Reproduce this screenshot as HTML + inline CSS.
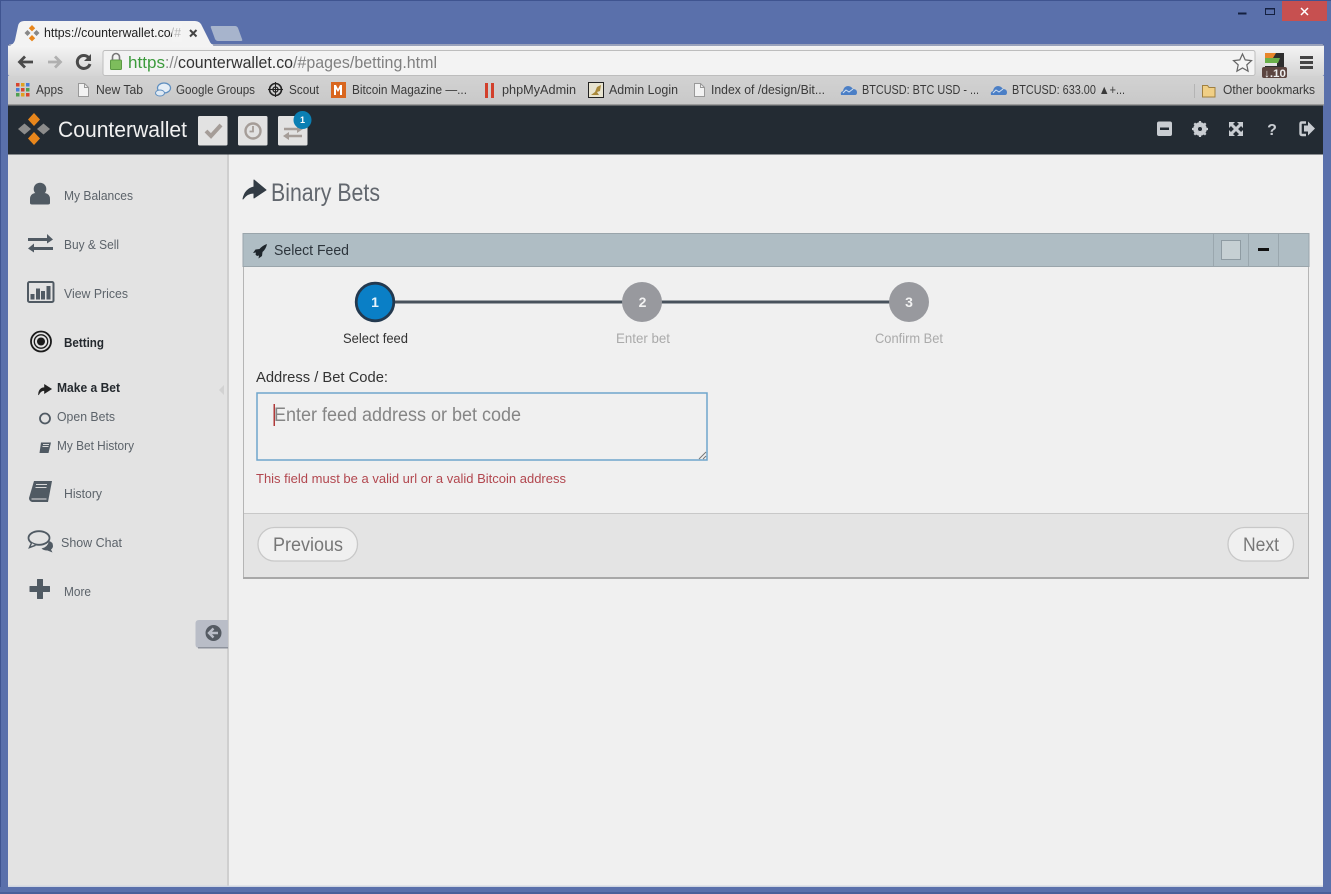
<!DOCTYPE html>
<html lang="en"><head><meta charset="utf-8"><title>Counterwallet - Binary Bets</title>
<style>
html,body{margin:0;padding:0;width:1331px;height:894px;overflow:hidden;background:#5a70ab}
svg{display:block;position:absolute;left:0;top:0;filter:blur(.3px)}
text{font-family:"Liberation Sans",Arial,sans-serif}
.bm{font-size:12.5px;fill:#3a3a3a}
.nav{font-size:12.5px;fill:#5c636a}
</style></head><body>
<svg width="1331" height="894" viewBox="0 0 1331 894" xmlns="http://www.w3.org/2000/svg">
<defs>
<linearGradient id="tb" x1="0" y1="0" x2="0" y2="1"><stop offset="0" stop-color="#f6f6f6"/><stop offset="1" stop-color="#d4d4d4"/></linearGradient>
<linearGradient id="bb" x1="0" y1="0" x2="0" y2="1"><stop offset="0" stop-color="#d2d2d2"/><stop offset="1" stop-color="#c8c8c8"/></linearGradient>
</defs>
<!-- window -->
<rect width="1331" height="894" fill="#5a70ab"/>
<rect width="1331" height="1" fill="#3f5490"/>
<rect width="1" height="894" fill="#3f5490"/>
<rect x="1282" y="1" width="45" height="20" fill="#c75050"/>
<path d="M1301 8l7 7M1308 8l-7 7" stroke="#fff" stroke-width="1.500"/>
<rect x="1238" y="12.500" width="8.500" height="2" fill="#14203f"/>
<rect x="1265.500" y="8.500" width="9" height="6" fill="none" stroke="#14203f" stroke-width="1"/>
<rect x="1265" y="8" width="10" height="1.500" fill="#14203f"/>
<!-- tabs -->
<path d="M212 26h23q2 0 3 2l4 11q1 2-1 2h-23q-2 0-3-2l-4-11q-1-2 1-2z" fill="#a7b4cc"/>
<rect x="8" y="44" width="1316" height="32" rx="2" fill="url(#tb)"/>
<rect x="8" y="44.500" width="1316" height="1" fill="#3e4f80"/>
<path d="M7 46q6 0 8-6l3-14q1-5 6-5h171q5 0 7 5l7 14q2 5 6 6z" fill="#f3f3f3"/>
<g transform="translate(32 33)"><path d="M0-8l3.200 3.200-3.200 3.200-3.200-3.200z" fill="#e8861c"/><path d="M0 2l3.200 3.200-3.200 3.200-3.200-3.200z" fill="#e8861c"/><path d="M-4.500-3l3 3-3 3-3-3z" fill="#888"/><path d="M4.500-3l3 3-3 3-3-3z" fill="#888"/></g>
<text x="44" y="37" font-size="12.500" fill="#222" textLength="137" lengthAdjust="spacingAndGlyphs">https://counterwallet.co/#</text>
<rect x="172" y="24" width="10" height="18" fill="#f3f3f3" opacity=".7"/>
<path d="M190 30l6.500 6.500M196.500 30l-6.500 6.500" stroke="#444" stroke-width="2"/>
<!-- toolbar -->
<path d="M19 62h14M25 56.500l-5.500 5.500 5.500 5.500" fill="none" stroke="#4a4a4a" stroke-width="2.800"/>
<path d="M61 62h-13M55 56.500l5.500 5.500-5.500 5.500" fill="none" stroke="#b0b0b0" stroke-width="2.800"/>
<path d="M89 58a6.500 6.500 0 1 0 1 6" fill="none" stroke="#4a4a4a" stroke-width="3"/>
<path d="M91 54v7h-7z" fill="#4a4a4a"/>
<rect x="103" y="50.500" width="1152" height="25" rx="2" fill="#f3f3f3" stroke="#bdbdbd"/>
<rect x="110.500" y="60" width="11" height="9.500" rx="1" fill="#7dbd5c" stroke="#5c9a44"/>
<path d="M112.500 60v-3a3.500 3.500 0 0 1 7 0v3" fill="none" stroke="#777" stroke-width="1.600"/>
<text x="128" y="68" font-size="17" fill="#3c9b3c" textLength="37" lengthAdjust="spacingAndGlyphs">https</text>
<text x="165" y="68" font-size="17" fill="#8a8a8a" textLength="13" lengthAdjust="spacingAndGlyphs">://</text>
<text x="178" y="68" font-size="17" fill="#333" textLength="115" lengthAdjust="spacingAndGlyphs">counterwallet.co</text>
<text x="293" y="68" font-size="17" fill="#808080" textLength="144" lengthAdjust="spacingAndGlyphs">/#pages/betting.html</text>
<path d="M1242.500 54l2.700 5.900 6.300.7-4.700 4.300 1.300 6.300-5.600-3.200-5.600 3.200 1.300-6.300-4.700-4.300 6.300-.7z" fill="#f6f6f6" stroke="#666" stroke-width="1.200"/>
<rect x="1300" y="56" width="13" height="3" fill="#444"/><rect x="1300" y="61" width="13" height="3" fill="#444"/><rect x="1300" y="66" width="13" height="3" fill="#444"/>
<!-- bookmarks bar -->
<rect x="8" y="76" width="1316" height="29" fill="url(#bb)"/>
<rect x="8" y="104" width="1316" height="1.500" fill="#9a9a9a"/>
<!-- ext icon -->
<rect x="1265" y="53" width="19" height="16" fill="#2e2e2e"/>
<path d="M1265 53h11l-3 5h-8z" fill="#e8862a"/>
<path d="M1265 58h15l-2 5h-13z" fill="#6ab04a"/>
<path d="M1265 63h12v3h-12z" fill="#e4e4e4"/>
<rect x="1262" y="67" width="25" height="11" rx="2" fill="#5c4540"/>
<text x="1264" y="77" font-size="11" font-weight="bold" fill="#eee" textLength="22" lengthAdjust="spacingAndGlyphs">↓.10</text>
<g>
<rect x="16" y="83" width="3.500" height="3.500" fill="#d8452e"/><rect x="21" y="83" width="3.500" height="3.500" fill="#e0a020"/><rect x="26" y="83" width="3.500" height="3.500" fill="#4a7dd8"/>
<rect x="16" y="88" width="3.500" height="3.500" fill="#4a7dd8"/><rect x="21" y="88" width="3.500" height="3.500" fill="#d8452e"/><rect x="26" y="88" width="3.500" height="3.500" fill="#50a050"/>
<rect x="16" y="93" width="3.500" height="3.500" fill="#50a050"/><rect x="21" y="93" width="3.500" height="3.500" fill="#e0a020"/><rect x="26" y="93" width="3.500" height="3.500" fill="#d8452e"/>
</g>
<text class="bm" x="36" y="94" textLength="27" lengthAdjust="spacingAndGlyphs">Apps</text>
<path d="M78.500 83.500h6l4 4v9h-10z" fill="#f2f2f2" stroke="#999"/><path d="M84.500 83.500v4h4" fill="none" stroke="#999"/>
<text class="bm" x="96" y="94" textLength="47" lengthAdjust="spacingAndGlyphs">New Tab</text>
<ellipse cx="164" cy="88" rx="6.500" ry="5" fill="#e6eef6" stroke="#5f8fc0" stroke-width="1.300"/><ellipse cx="160" cy="93" rx="4.500" ry="3" fill="#dfe9f3" stroke="#5f8fc0"/>
<text class="bm" x="176" y="94" textLength="79" lengthAdjust="spacingAndGlyphs">Google Groups</text>
<circle cx="275.500" cy="89.500" r="6" fill="none" stroke="#222" stroke-width="1.600"/><circle cx="275.500" cy="89.500" r="2.500" fill="none" stroke="#222" stroke-width="1.300"/><path d="M275.500 82v15M268 89.500h15" stroke="#222"/>
<text class="bm" x="289" y="94" textLength="30" lengthAdjust="spacingAndGlyphs">Scout</text>
<rect x="331" y="82" width="15" height="16" fill="#d9661e"/>
<path d="M334 95v-10h2l2 4 2-4h2v10h-2v-6l-2 3-2-3v6z" fill="#fff"/>
<text class="bm" x="352" y="94" textLength="115" lengthAdjust="spacingAndGlyphs">Bitcoin Magazine —...</text>
<rect x="485" y="83" width="3" height="15" fill="#d2402c"/><rect x="491" y="83" width="3" height="15" fill="#d2402c"/>
<text class="bm" x="502" y="94" textLength="74" lengthAdjust="spacingAndGlyphs">phpMyAdmin</text>
<rect x="588.500" y="82.500" width="15" height="15" fill="#e8e4d0" stroke="#222"/>
<path d="M591 95l4-3 2-5 4-2-1 6-3 1 2 3z" fill="#a9893a"/>
<text class="bm" x="609" y="94" textLength="69" lengthAdjust="spacingAndGlyphs">Admin Login</text>
<path d="M694.500 83.500h6l4 4v9h-10z" fill="#f2f2f2" stroke="#999"/><path d="M700.500 83.500v4h4" fill="none" stroke="#999"/>
<text class="bm" x="711" y="94" textLength="114" lengthAdjust="spacingAndGlyphs">Index of /design/Bit...</text>
<path d="M841 95q-1-3 2-4 1-5 5-5 3 0 5 3 4 0 4 3.500 0 2.500-2 2.500z" fill="#4b7fc6"/><path d="M843 93l3-3 3 2 4-3" fill="none" stroke="#cfe0f2"/>
<text class="bm" x="862" y="94" textLength="117" lengthAdjust="spacingAndGlyphs">BTCUSD: BTC USD - ...</text>
<path d="M991 95q-1-3 2-4 1-5 5-5 3 0 5 3 4 0 4 3.500 0 2.500-2 2.500z" fill="#4b7fc6"/><path d="M993 93l3-3 3 2 4-3" fill="none" stroke="#cfe0f2"/>
<text class="bm" x="1012" y="94" textLength="113" lengthAdjust="spacingAndGlyphs">BTCUSD: 633.00 ▲+...</text>
<rect x="1194" y="84" width="1" height="14" fill="#b4b4b4"/>
<path d="M1202.500 85.500h5l1.500 2h6v9.500h-12.500z" fill="#f0cf85" stroke="#a08040"/>
<text class="bm" x="1223" y="94" textLength="92" lengthAdjust="spacingAndGlyphs">Other bookmarks</text>
<!-- app header -->
<rect x="8" y="105.500" width="1315" height="49" fill="#232b33"/>
<path d="M34 113l6 6.500-6 6.500-6-6.500z" fill="#e8861c"/>
<path d="M34 132l6 6.500-6 6.500-6-6.500z" fill="#e8861c"/>
<path d="M24.500 123.500l6.500 5.500-6.500 5.500-6.500-5.500z" fill="#8c8c8c"/>
<path d="M43.500 123.500l6.500 5.500-6.500 5.500-6.500-5.500z" fill="#8c8c8c"/>
<text x="58" y="137" font-size="22.500" fill="#f0f0f0" textLength="129" lengthAdjust="spacingAndGlyphs">Counterwallet</text>
<rect x="198" y="116" width="29.500" height="29.500" rx="1.500" fill="#e2e2e2"/>
<path d="M206 131l5 5 10-11" fill="none" stroke="#a59d98" stroke-width="4"/>
<rect x="238" y="116" width="29.500" height="29.500" rx="1.500" fill="#e2e2e2"/>
<circle cx="253" cy="131" r="7.500" fill="none" stroke="#a59d98" stroke-width="2.400"/><path d="M253 126v5.500h-3.500" fill="none" stroke="#a59d98" stroke-width="1.800"/>
<rect x="278" y="116" width="29.500" height="29.500" rx="1.500" fill="#e2e2e2"/>
<path d="M284 129h14M302 136h-14" stroke="#a59d98" stroke-width="2.400"/>
<path d="M297 125l6 4-6 4zM289 132l-6 4 6 4z" fill="#a59d98"/>
<circle cx="302.500" cy="120" r="9" fill="#0b7fb3"/>
<text x="302.500" y="123" font-size="9" font-weight="bold" fill="#fff" text-anchor="middle">1</text>
<rect x="1157" y="121.500" width="15" height="14.500" rx="2" fill="#c9cdd2"/><rect x="1160" y="127.500" width="9" height="2.500" fill="#232b33"/>
<circle cx="1200" cy="129" r="5" fill="none" stroke="#c9cdd2" stroke-width="3.500"/>
<path d="M1200 121v16M1192 129h16M1194.300 123.300l11.400 11.400M1205.700 123.300l-11.400 11.400" stroke="#c9cdd2" stroke-width="2.200"/>
<circle cx="1200" cy="129" r="2" fill="#232b33"/>
<path d="M1231 124l10 10M1241 124l-10 10" stroke="#c9cdd2" stroke-width="3"/>
<path d="M1229 122h6l-6 6zM1243 122h-6l6 6zM1229 136h6l-6-6zM1243 136h-6l6-6z" fill="#c9cdd2"/>
<text x="1272" y="135" font-size="16" font-weight="bold" fill="#c9cdd2" text-anchor="middle">?</text>
<path d="M1306 122.500h-4q-1.500 0-1.500 1.500v9.500q0 1.500 1.500 1.500h4" fill="none" stroke="#c9cdd2" stroke-width="2.400"/>
<path d="M1304 125.500h4v-4l7 7-7 7v-4h-4z" fill="#c9cdd2"/>
<!-- sidebar / content -->
<rect x="8" y="154.500" width="220" height="732" fill="#e3e3e3"/>
<rect x="227" y="154.500" width="2" height="732" fill="#cfcfcf"/>
<rect x="229" y="154.500" width="1094" height="732" fill="#f0f0f0"/>
<rect x="8" y="885.500" width="1315" height="1.500" fill="#cfd6e2"/>
<rect x="0" y="887" width="1331" height="7" fill="#5a70ab"/>
<rect x="0" y="892" width="1331" height="2" fill="#4a5f99"/>
<!-- nav icons -->
<circle cx="40" cy="189" r="6.300" fill="#505a63"/>
<path d="M30 203v-4q0-5 5-6l5 2 5-2q5 1 5 6v4q0 1.500-2 1.500h-16q-2 0-2-1.500z" fill="#505a63"/>
<rect x="28" y="238" width="21" height="3" fill="#505a63"/>
<path d="M47 234l6 5.500-6 4z" fill="#505a63"/>
<rect x="32" y="247" width="21" height="3" fill="#505a63"/>
<path d="M34 243.500l-6 5 6 4z" fill="#505a63"/>
<rect x="28" y="282" width="25.500" height="20" rx="1.500" fill="none" stroke="#505a63" stroke-width="2"/>
<rect x="30.500" y="294" width="4" height="5.500" fill="#505a63"/><rect x="36" y="288.500" width="4" height="11" fill="#505a63"/><rect x="41" y="291" width="4" height="8.500" fill="#505a63"/><rect x="46.500" y="286" width="4" height="13.500" fill="#505a63"/>
<circle cx="41" cy="341.500" r="10" fill="none" stroke="#1a1a1a" stroke-width="1.800"/>
<circle cx="41" cy="341.500" r="6.700" fill="none" stroke="#1a1a1a" stroke-width="1.300"/>
<circle cx="41" cy="341.500" r="4" fill="#1a1a1a"/>
<path d="M38.500 395q0-7 6-7.500v-3l7 4.500-7 4.500v-3q-4 0-6 4.500z" fill="#222" stroke="#222" stroke-width=".6"/>
<circle cx="45" cy="418.500" r="5" fill="none" stroke="#505a63" stroke-width="1.800"/>
<path d="M41 442.500h10l-2.500 10.500h-9z" fill="#505a63"/><path d="M43 444.500h6M42.500 446.500h6" stroke="#d8d8d8"/>
<path d="M34 481h18l-4 21h-16q-3-1-3-4z" fill="#505a63"/><path d="M36 484.500h11M35.500 487.500h11" stroke="#d8d8d8"/><path d="M31.500 499h15" stroke="#e3e3e3"/>
<path d="M49 541q4 1 4 5 0 2-2 3.500l1.500 3-5-2q-4 0-6-2 6-1 7.500-7.500z" fill="#505a63"/>
<ellipse cx="39" cy="538" rx="10.500" ry="6.800" fill="#e3e3e3" stroke="#505a63" stroke-width="1.800"/>
<path d="M31.500 543l-2 4.500 6-2.200" fill="#e3e3e3" stroke="#505a63" stroke-width="1.500"/>
<path d="M37.500 579h5q.5 0 .5 .5v6.500h6.500q.5 0 .5 .5v5q0 .5-.5 .5h-6.500v6.500q0 .5-.5 .5h-5q-.5 0-.5-.5v-6.500h-7q-.5 0-.5-.5v-5q0-.5.500-.5h7v-6.500q0-.5.500-.5z" fill="#505a63"/>
<!-- nav text -->
<text class="nav" x="64" y="200" textLength="69" lengthAdjust="spacingAndGlyphs">My Balances</text>
<text class="nav" x="64" y="249" textLength="55" lengthAdjust="spacingAndGlyphs">Buy &amp; Sell</text>
<text class="nav" x="64" y="298" textLength="64" lengthAdjust="spacingAndGlyphs">View Prices</text>
<text x="64" y="347" font-size="12.500" font-weight="bold" fill="#24292e" textLength="40" lengthAdjust="spacingAndGlyphs">Betting</text>
<text x="57" y="392" font-size="12.500" font-weight="bold" fill="#24292e" textLength="63" lengthAdjust="spacingAndGlyphs">Make a Bet</text>
<text class="nav" x="57" y="421" textLength="58" lengthAdjust="spacingAndGlyphs">Open Bets</text>
<text class="nav" x="57" y="450" textLength="77" lengthAdjust="spacingAndGlyphs">My Bet History</text>
<text class="nav" x="64" y="498" textLength="38" lengthAdjust="spacingAndGlyphs">History</text>
<text class="nav" x="61" y="547" textLength="61" lengthAdjust="spacingAndGlyphs">Show Chat</text>
<text class="nav" x="64" y="596" textLength="27" lengthAdjust="spacingAndGlyphs">More</text>
<path d="M224 385v10l-5-5z" fill="#d2d2d2"/>
<path d="M228 620h-29q-3.500 0-3.500 3.500v21q0 3.500 3.500 3.500h29z" fill="#b9bdc7"/>
<rect x="198" y="647" width="30" height="1.500" fill="#8d929c"/>
<circle cx="213.500" cy="633" r="8" fill="#555b63"/>
<path d="M218 633h-7M213.500 628.500l-4.500 4.500 4.500 4.500" fill="none" stroke="#b9bdc7" stroke-width="2.400"/>
<!-- title -->
<path d="M243 199q2-10 11-12v-7l12 10-12 8v-5q-7 0-11 6z" fill="#333c45" stroke="#333c45" stroke-linejoin="round"/>
<text x="271" y="201" font-size="25" fill="#62676e" textLength="109" lengthAdjust="spacingAndGlyphs">Binary Bets</text>
<!-- panel -->
<rect x="243.500" y="233.500" width="1065" height="344" fill="#f0f0f0" stroke="#b5b5b5"/>
<rect x="243" y="233.500" width="1066" height="33" fill="#afbdc4" stroke="#9aa5ab"/>
<path d="M267 244q-1 5-4.500 8l-.5 4-3.500 2.500.5-3-2 .5-1.500-1.500.5-2-3 .5 2.500-3.500 4-.5q3-3.500 7.500-5z" fill="#1f262c"/>
<text x="274" y="255" font-size="15" fill="#2d353c" textLength="75" lengthAdjust="spacingAndGlyphs">Select Feed</text>
<path d="M1213.500 234v32M1248.500 234v32M1278.500 234v32" stroke="#9aa7ae"/>
<rect x="1221.500" y="240.500" width="19" height="19" fill="#c6d0d3" stroke="#8e9ba2"/>
<rect x="1258" y="248" width="11" height="3" fill="#111"/>
<!-- wizard -->
<rect x="375" y="300.500" width="534" height="3" fill="#48525c"/>
<circle cx="375" cy="302" r="18.800" fill="#0a7fc6" stroke="#23394f" stroke-width="2.800"/>
<text x="375" y="307" font-size="14" font-weight="bold" fill="#e8f4fc" text-anchor="middle">1</text>
<circle cx="642" cy="302" r="20" fill="#98999e"/>
<text x="642.500" y="307" font-size="14" font-weight="bold" fill="#f2f2f2" text-anchor="middle">2</text>
<circle cx="909" cy="302" r="20" fill="#98999e"/>
<text x="909" y="307" font-size="14" font-weight="bold" fill="#f2f2f2" text-anchor="middle">3</text>
<text x="343" y="343" font-size="14" fill="#333" textLength="65" lengthAdjust="spacingAndGlyphs">Select feed</text>
<text x="616" y="343" font-size="14" fill="#aaa" textLength="54" lengthAdjust="spacingAndGlyphs">Enter bet</text>
<text x="875" y="343" font-size="14" fill="#aaa" textLength="68" lengthAdjust="spacingAndGlyphs">Confirm Bet</text>
<!-- form -->
<text x="256" y="382" font-size="15" fill="#333" textLength="132" lengthAdjust="spacingAndGlyphs">Address / Bet Code:</text>
<rect x="257" y="393" width="450" height="67" fill="#f0f0f0" stroke="#6fa6cc" stroke-width="1.500"/>
<rect x="273.500" y="404" width="1.500" height="22" fill="#b03a3a"/>
<text x="274" y="421" font-size="19" fill="#858585" textLength="247" lengthAdjust="spacingAndGlyphs">Enter feed address or bet code</text>
<path d="M699 459l7-7M703 459l3-3" stroke="#777"/>
<text x="256" y="483" font-size="13" fill="#b2474f" textLength="310" lengthAdjust="spacingAndGlyphs">This field must be a valid url or a valid Bitcoin address</text>
<!-- footer -->
<rect x="244" y="513.500" width="1064" height="64" fill="#e4e4e4"/>
<rect x="244" y="513" width="1064" height="1" fill="#c8c8c8"/>
<rect x="243" y="577" width="1066" height="2" fill="#a8a8a8"/>
<rect x="258" y="527.500" width="99.500" height="33.500" rx="16.500" fill="#f0f0f0" stroke="#c8c8c8" stroke-width="1.300"/>
<text x="273" y="551" font-size="19" fill="#777" textLength="70" lengthAdjust="spacingAndGlyphs">Previous</text>
<rect x="1228" y="527.500" width="65.500" height="33.500" rx="16.500" fill="#f0f0f0" stroke="#c8c8c8" stroke-width="1.300"/>
<text x="1243" y="551" font-size="19" fill="#777" textLength="36" lengthAdjust="spacingAndGlyphs">Next</text>
</svg>
</body></html>
